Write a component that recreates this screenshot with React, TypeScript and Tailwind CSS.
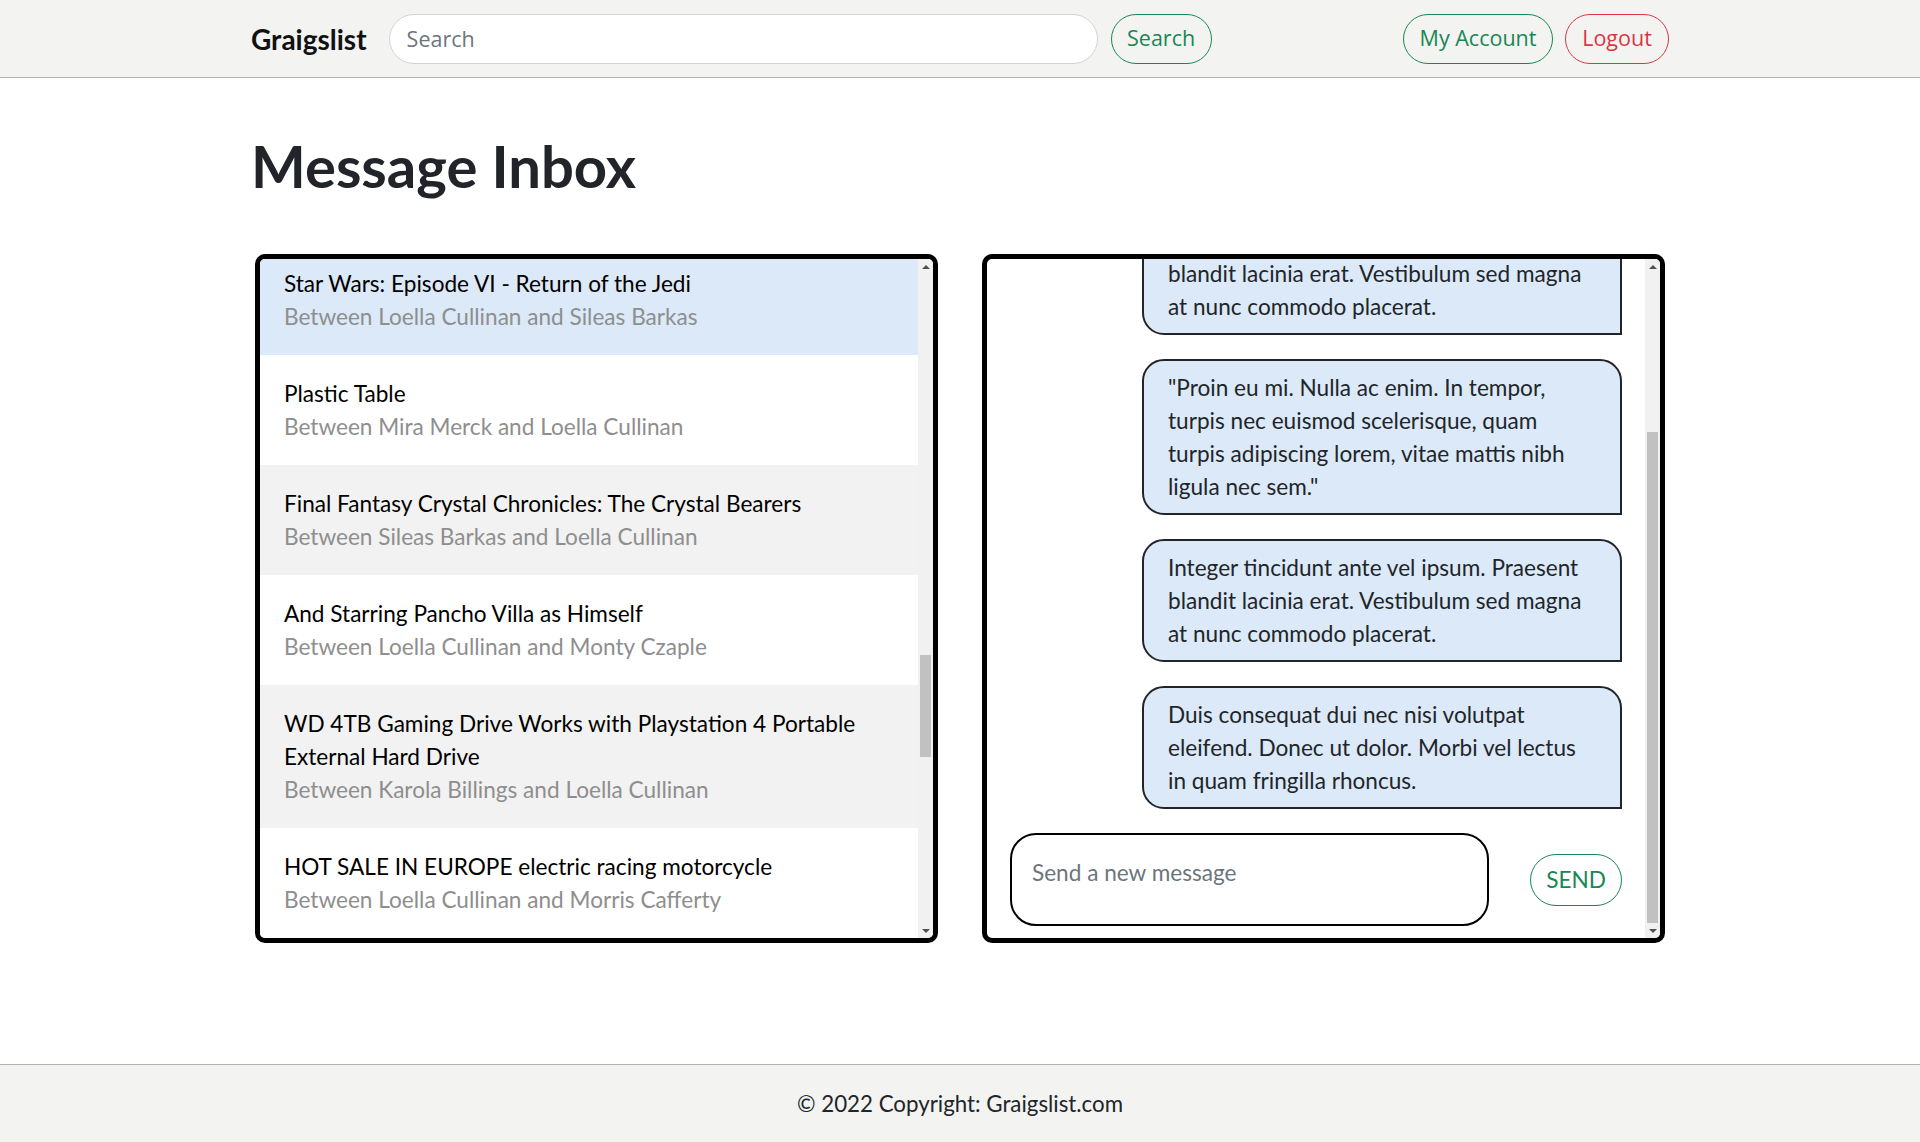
import React, {useEffect, useRef, useState} from "react";

interface Conversation {
    title: string;
    first: string;
    second: string;
}

interface Thumb {
    top: number;
    height: number;
}

const before: Conversation[] = [
    {title: "Vintage Oak Dresser", first: "Loella Cullinan", second: "Ardelia Pollins"},
    {title: "Mountain Bike 21 Speed", first: "Tamqrah Stebbings", second: "Loella Cullinan"},
    {title: "Apple iPhone 8 64GB Unlocked Space Gray Good Condition With Charger", first: "Loella Cullinan", second: "Gustie Marrison"},
    {title: "Kids Bunk Bed", first: "Rodge Whiteford", second: "Loella Cullinan"},
    {title: "Nintendo Switch Lite", first: "Loella Cullinan", second: "Mira Merck"},
    {title: "Leather Sofa", first: "Sileas Barkas", second: "Loella Cullinan"},
    {title: "Canon EOS Rebel T7 DSLR Camera with 18-55mm Lens Kit and Carrying Bag", first: "Loella Cullinan", second: "Monty Czaple"},
    {title: "Garden Hose 50ft", first: "Karola Billings", second: "Loella Cullinan"},
    {title: "Acoustic Guitar", first: "Loella Cullinan", second: "Morris Cafferty"},
    {title: "Dining Table Set", first: "Bertie Cowley", second: "Loella Cullinan"},
    {title: "Electric Lawn Mower", first: "Loella Cullinan", second: "Ardelia Pollins"},
    {title: "Samsung 55 Inch 4K UHD Smart LED Television with HDR and Wall Mount", first: "Gustie Marrison", second: "Loella Cullinan"},
    {title: "Office Chair", first: "Loella Cullinan", second: "Rodge Whiteford"},
    {title: "Snowboard and Boots", first: "Tamqrah Stebbings", second: "Loella Cullinan"},
    {title: "Coffee Maker", first: "Loella Cullinan", second: "Bertie Cowley"},
    {title: "Standing Desk", first: "Mira Merck", second: "Loella Cullinan"},
    {title: "Pressure Washer", first: "Loella Cullinan", second: "Sileas Barkas"},
    {title: "Bookshelf", first: "Monty Czaple", second: "Loella Cullinan"},
    {title: "Road Bike Helmet", first: "Loella Cullinan", second: "Karola Billings"},
    {title: "Air Fryer", first: "Morris Cafferty", second: "Loella Cullinan"},
    {title: "Patio Umbrella", first: "Loella Cullinan", second: "Gustie Marrison"},
    {title: "Baby Stroller", first: "Ardelia Pollins", second: "Loella Cullinan"},
];

const visible: Conversation[] = [
    {title: "Star Wars: Episode VI - Return of the Jedi", first: "Loella Cullinan", second: "Sileas Barkas"},
    {title: "Plastic Table", first: "Mira Merck", second: "Loella Cullinan"},
    {title: "Final Fantasy Crystal Chronicles: The Crystal Bearers", first: "Sileas Barkas", second: "Loella Cullinan"},
    {title: "And Starring Pancho Villa as Himself", first: "Loella Cullinan", second: "Monty Czaple"},
    {title: "WD 4TB Gaming Drive Works with Playstation 4 Portable External Hard Drive", first: "Karola Billings", second: "Loella Cullinan"},
    {title: "HOT SALE IN EUROPE electric racing motorcycle", first: "Loella Cullinan", second: "Morris Cafferty"},
];

const after: Conversation[] = [
    {title: "Microwave Oven", first: "Bertie Cowley", second: "Loella Cullinan"},
    {title: "Kayak with Paddle", first: "Loella Cullinan", second: "Rodge Whiteford"},
    {title: "Treadmill", first: "Tamqrah Stebbings", second: "Loella Cullinan"},
    {title: "Queen Mattress", first: "Loella Cullinan", second: "Ardelia Pollins"},
    {title: "Xbox One Controller", first: "Gustie Marrison", second: "Loella Cullinan"},
    {title: "Ceiling Fan", first: "Loella Cullinan", second: "Mira Merck"},
    {title: "Tool Box", first: "Karola Billings", second: "Loella Cullinan"},
    {title: "Dog Crate", first: "Loella Cullinan", second: "Monty Czaple"},
    {title: "Wall Mirror", first: "Sileas Barkas", second: "Loella Cullinan"},
    {title: "Desk Lamp", first: "Loella Cullinan", second: "Morris Cafferty"},
];

const conversations = [...before, ...visible, ...after];
const selectedIndex = before.length;

const messages: string[] = [
    "Duis consequat dui nec nisi volutpat eleifend. Donec ut dolor. Morbi vel lectus in quam fringilla rhoncus.",
    "Integer tincidunt ante vel ipsum. Praesent blandit lacinia erat. Vestibulum sed magna at nunc commodo placerat.",
    "\"Proin eu mi. Nulla ac enim. In tempor, turpis nec euismod scelerisque, quam turpis adipiscing lorem, vitae mattis nibh ligula nec sem.\"",
    "Integer tincidunt ante vel ipsum. Praesent blandit lacinia erat. Vestibulum sed magna at nunc commodo placerat.",
    "Duis consequat dui nec nisi volutpat eleifend. Donec ut dolor. Morbi vel lectus in quam fringilla rhoncus.",
];

const body = "font-['Lato',sans-serif]";
const ui = "font-['Open_Sans',sans-serif]";

// thumb geometry from the scroll metrics of a box (track = box minus two 15px arrow buttons)
function measureThumb(el: HTMLDivElement): Thumb {
    const track = el.clientHeight - 30;
    const height = Math.max(Math.round(track * el.clientHeight / el.scrollHeight), 17);
    const range = el.scrollHeight - el.clientHeight;
    const top = range > 0 ? Math.round((track - height) * el.scrollTop / range) : 0;
    return {top, height};
}

function Scrollbar({thumb}: {thumb: Thumb}) {
    return (
        <div className="w-[15px] shrink-0 bg-[#f1f1f1] flex flex-col">
            <div className="h-[15px] flex items-center justify-center">
                <svg width="8" height="4" viewBox="0 0 8 4"><polygon points="0,4 4,0 8,4" fill="#505050"/></svg>
            </div>
            <div className="flex-1 relative">
                <div className="absolute left-[2px] right-[2px] bg-[#c1c1c1]"
                     style={{top: thumb.top, height: thumb.height}}/>
            </div>
            <div className="h-[15px] flex items-center justify-center">
                <svg width="8" height="4" viewBox="0 0 8 4"><polygon points="0,0 8,0 4,4" fill="#505050"/></svg>
            </div>
        </div>
    )
}

function Navbar() {
    return (
        <nav className="bg-[#f3f3f1] border-b border-[#b3b3b3] h-[78px]">
            <div className="w-[1418px] mx-auto h-full flex items-center">
                <a className={`${body} text-[28px] font-bold text-[#111] mr-[22px]`}>Graigslist</a>
                <input type="text" placeholder="Search"
                       className={`${ui} w-[709px] h-[50px] rounded-full border border-[#ced4da] bg-white px-[17px] text-[21.5px] placeholder:text-[#6c757d] outline-none mr-[13px]`}/>
                <button className={`${ui} h-[50px] w-[101px] rounded-full border border-[#198754] text-[#198754] text-[21.5px]`}>Search</button>

                <div className="ml-auto flex items-center gap-[12px]">
                    <button className={`${ui} h-[50px] w-[150px] rounded-full border border-[#198754] text-[#198754] text-[21.5px]`}>My Account</button>
                    <button className={`${ui} h-[50px] w-[104px] rounded-full border border-[#dc3545] text-[#dc3545] text-[21.5px]`}>Logout</button>
                </div>
            </div>
        </nav>
    )
}

function ConversationList() {
    const listRef = useRef<HTMLDivElement>(null);
    const selectedRef = useRef<HTMLDivElement>(null);
    const [thumb, setThumb] = useState<Thumb>({top: 0, height: 0});

    useEffect(() => {
        if (listRef.current && selectedRef.current) {
            listRef.current.scrollTop = selectedRef.current.offsetTop + 14;
            setThumb(measureThumb(listRef.current));
        }
    }, [])

    return (
        <div className="h-[689px] border-[5px] border-black rounded-[10px] overflow-hidden bg-white flex">
            <div ref={listRef} className="relative flex-1 overflow-hidden">
                {conversations.map((c, i) => {
                    let bg = i % 2 === 0 ? "bg-[#f2f2f2]" : "bg-white";
                    if (i === selectedIndex) bg = "bg-[#dbe9f8]";
                    return (
                        <div key={i} ref={i === selectedIndex ? selectedRef : undefined}
                             className={`${bg} pl-[24px] pr-[24px] py-[22px] text-[22.6px] leading-[33px]`}>
                            <div className="text-black">{c.title}</div>
                            <div className="text-[#8e8e8e]">Between {c.first} and {c.second}</div>
                        </div>
                    )
                })}
            </div>
            <Scrollbar thumb={thumb}/>
        </div>
    )
}

function ChatPanel() {
    const chatRef = useRef<HTMLDivElement>(null);
    const [thumb, setThumb] = useState<Thumb>({top: 0, height: 0});

    useEffect(() => {
        if (chatRef.current) {
            chatRef.current.scrollTop = chatRef.current.scrollHeight;
            setThumb(measureThumb(chatRef.current));
        }
    }, [])

    return (
        <div className="h-[689px] border-[5px] border-black rounded-[10px] overflow-hidden bg-white flex">
            <div ref={chatRef} className="flex-1 overflow-hidden">
                <div className="px-[23px] pt-[24px] pb-[12px]">
                    <div className="flex flex-col gap-[24px]">
                        {messages.map((m, i) => (
                            <div key={i}
                                 className="ml-auto w-[480px] bg-[#dbe9f8] border-2 border-[#212529] rounded-tl-[22px] rounded-tr-[22px] rounded-bl-[22px] px-[24px] py-[10px] text-[22.6px] leading-[33px] text-[#212529]">
                                {m}
                            </div>
                        ))}
                    </div>

                    <div className="flex items-center justify-between mt-[24px]">
                        <textarea placeholder="Send a new message"
                                  className="w-[479px] h-[93px] resize-none border-2 border-black rounded-[26px] px-[20px] py-[21px] text-[22.6px] leading-[33px] placeholder:text-[#6c757d] outline-none"/>
                        <button className="h-[52px] w-[92px] rounded-full border border-[#198754] text-[#198754] text-[22.6px]">SEND</button>
                    </div>
                </div>
            </div>
            <Scrollbar thumb={thumb}/>
        </div>
    )
}

function App() {
    return (
        <div className={`${body} min-h-screen flex flex-col bg-white text-[#212529]`}>
            <Navbar/>

            <main className="flex-1">
                <div className="w-[1418px] mx-auto">
                    <h1 className="text-[58px] leading-[67px] font-bold mt-[54px] mb-[55px]">Message Inbox</h1>

                    <div className="grid grid-cols-2 gap-[44px] px-[4px]">
                        <ConversationList/>
                        <ChatPanel/>
                    </div>
                </div>
            </main>

            <footer className="bg-[#f3f3f1] border-t border-[#b3b3b3] h-[78px] flex items-center justify-center">
                <p className="text-[22.3px]">© 2022 Copyright: Graigslist.com</p>
            </footer>
        </div>
    )
}

export default App;
